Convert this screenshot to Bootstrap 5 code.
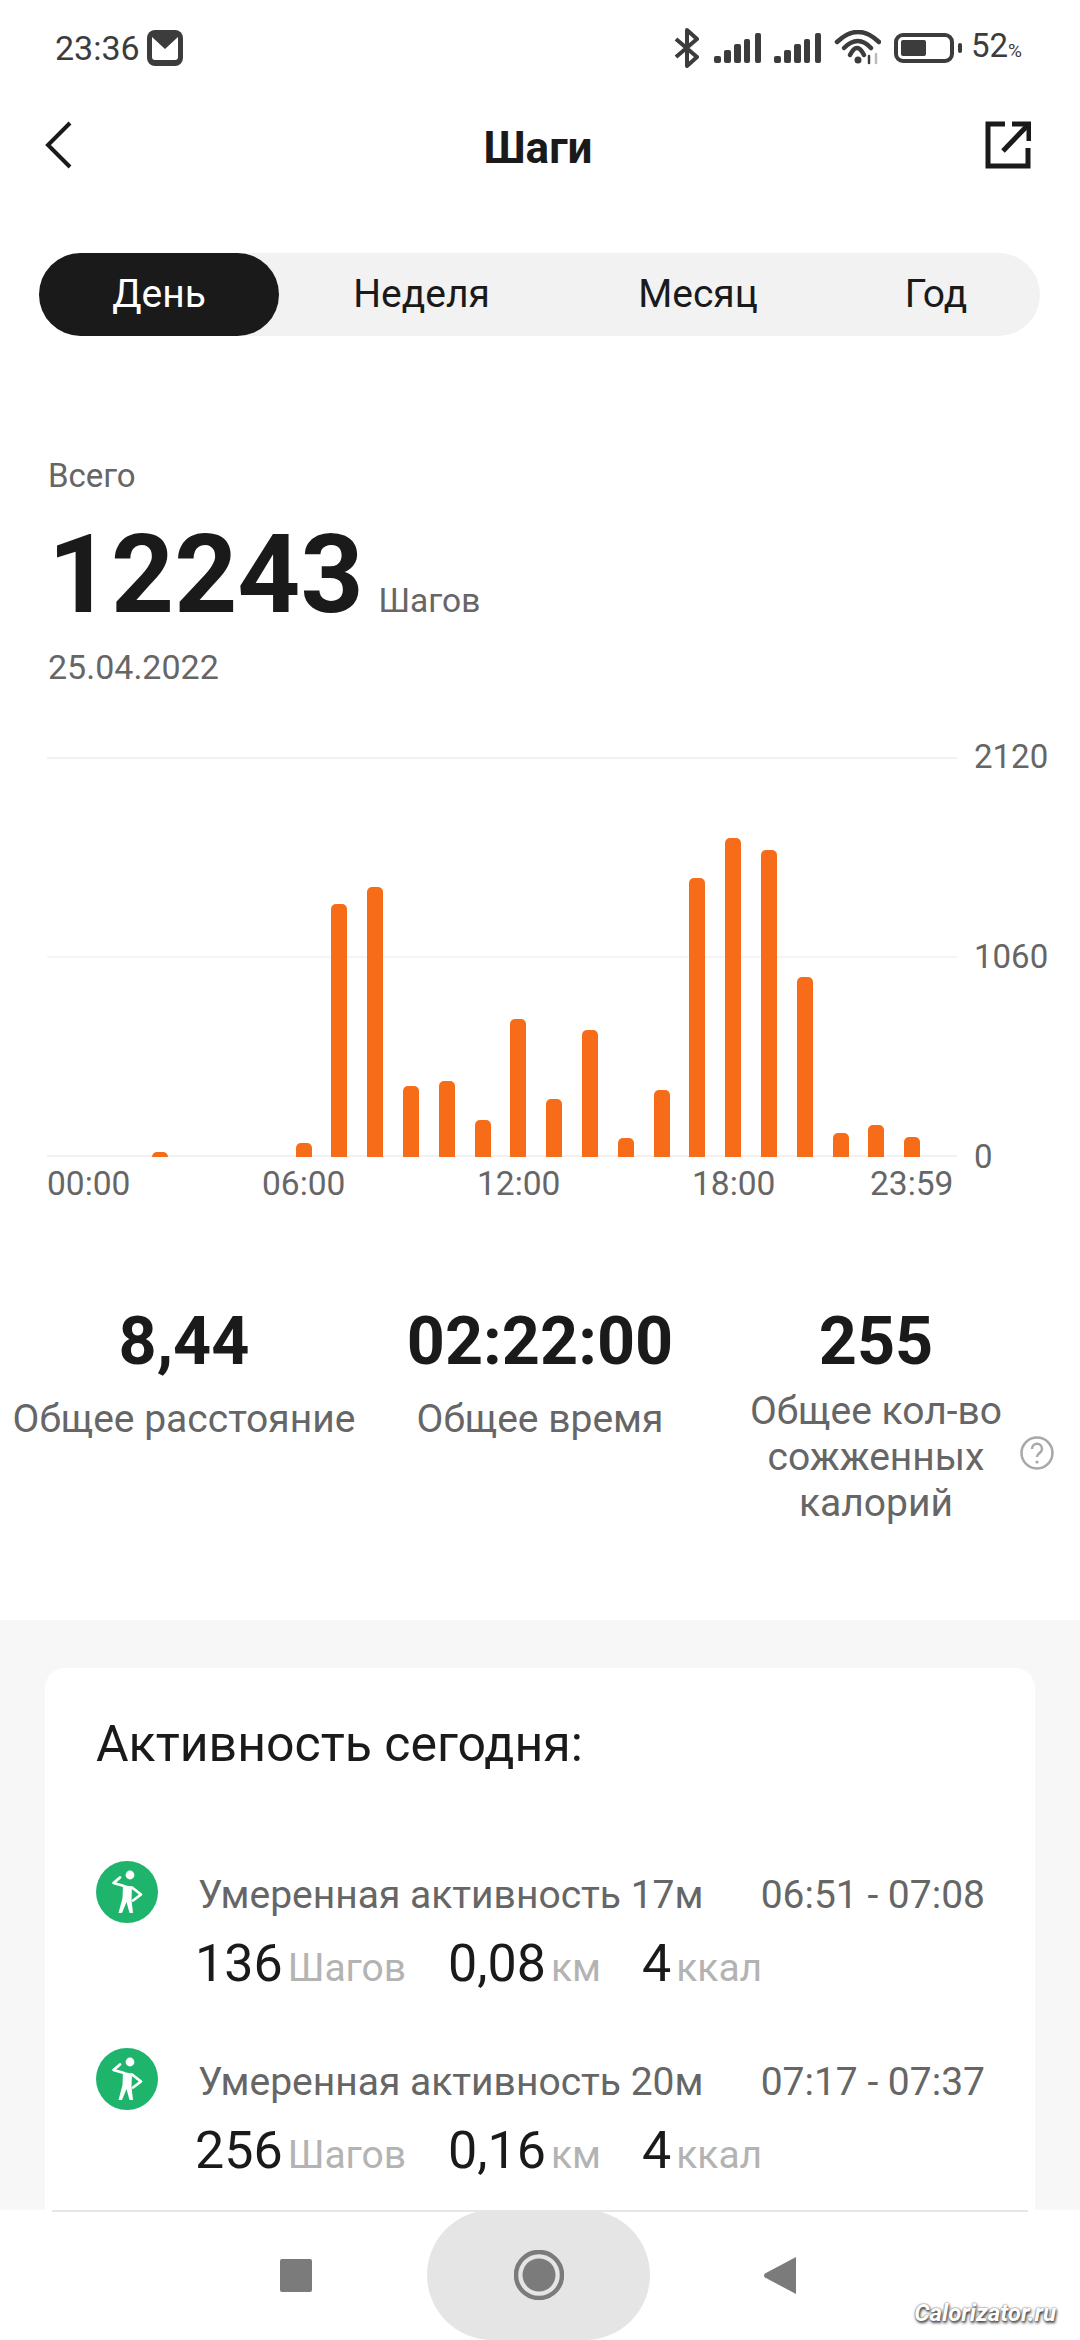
<!DOCTYPE html>
<html lang="ru">
<head>
  <meta charset="UTF-8">
  <meta name="viewport" content="width=device-width, initial-scale=1.0">
  <title>Шаги</title>
  <link href="https://cdn.jsdelivr.net/npm/bootstrap@5.3.3/dist/css/bootstrap.min.css" rel="stylesheet">
  <style>
    html, body { margin: 0; background: #fff; }
    body { font-family: Roboto, "Liberation Sans", sans-serif; color: #1a1a1a; }
    .app-screen { width: 1080px; height: 2340px; overflow: hidden; position: relative; }

    .status-row { height: 96px; padding: 0 58px 0 55px; color: #3c3c3c; }
    .status-time { font-size: 34px; line-height: 40px; width: 92px; }
    .status-pct { font-size: 33px; line-height: 40px; margin-left: 9px; }
    .status-pct span { font-size: 19px; }

    .head-row { height: 104px; padding: 0 49px 0 45px; }
    .head-title { font-size: 44px; font-weight: 700; line-height: 50px; }
    .head-back { margin: 0 18px 6px 0; }
    .head-share { margin-bottom: 6px; }

    .seg-wrap { margin: 53px 40px 0 39px; height: 83px; background: #f2f2f2; border-radius: 42px; }
    .seg-item { font-size: 39px; line-height: 83px; text-align: center; color: #1a1a1a; }
    .seg-on { width: 240px; background: #1a1a1a; color: #fff; border-radius: 42px; }
    .seg-a { width: 285px; }
    .seg-b { width: 268px; }
    .seg-c { width: 208px; }

    .total-box { padding-left: 48px; }
    .total-cap { margin-top: 120px; font-size: 33px; line-height: 40px; color: #666; }
    .total-num { margin-top: 29px; height: 100px; line-height: 100px; font-size: 110px; font-weight: 700; }
    .total-unit { font-size: 33.5px; font-weight: 400; color: #666; margin-left: 15px; }
    .total-date { margin-top: 22px; font-size: 34px; line-height: 40px; color: #666; }

    .chart-box { margin-top: 70px; padding-left: 47px; }
    .chart-plot {
      width: 910px; height: 400px; padding-left: 24px;
      background:
        linear-gradient(#f1f1f1, #f1f1f1) 0 0 / 100% 2px no-repeat,
        linear-gradient(#f5f5f5, #f5f5f5) 0 199px / 100% 2px no-repeat,
        linear-gradient(#f1f1f1, #f1f1f1) 0 398px / 100% 2px no-repeat;
    }
    .bar-slot { width: 35.8px; height: 400px; flex: none; }
    .bar-fill { width: 16px; background: #f76c18; border-radius: 5px 5px 0 0; }
    .axis-y { height: 440px; margin: -20px 0 -20px 17px; font-size: 33px; line-height: 40px; color: #666; }
    .axis-x { margin: 7px 0 0 47px; font-size: 33.5px; line-height: 40px; color: #666; }
    .axis-x span { width: 215px; flex: none; }
    .axis-x span.axis-short { width: 178px; }

    .stats-grid { display: grid; grid-template-columns: 368px 344px 328px 40px; margin-top: 102px; height: 314px; }
    .stat-val { font-size: 66.5px; font-weight: 700; line-height: 70px; }
    .stat-lab { font-size: 39px; line-height: 46px; color: #666; margin-top: 20px; }
    .stat-lab-top { margin-top: 12px; }
    .stat-help { padding-top: 130px; margin-left: -47px; }

    .lower-area { background: #f7f7f7; padding: 48px 45px 0; flex: 1 1 0; min-height: 0; overflow: hidden; }
    .act-card { background: #fff; border-radius: 20px 20px 0 0; padding: 50px 50px 0 51px; height: 600px; }
    .act-head { font-size: 50px; line-height: 52px; }
    .act-row { height: 187px; }
    .act-first { margin-top: 102px; }
    .act-dot { width: 62px; height: 62px; flex: none; margin-top: -11px; }
    .act-body { margin-left: 37px; width: 790px; }
    .act-title { font-size: 39px; line-height: 46px; color: #666; padding-left: 3px; }
    .act-nums { font-size: 52px; line-height: 60px; margin-top: 16px; }
    .act-nums i { font-style: normal; font-size: 39px; color: #b3b3b3; margin-left: 5px; }
    .act-steps { width: 253px; }
    .act-dist { width: 194px; }

    .nav-bottom { height: 130px; flex: none; background: #fff; position: relative; }
    .nav-rule { position: absolute; left: 52px; right: 52px; top: 0; height: 2px; background: #e6e6e6; }
    .nav-home { width: 223px; height: 130px; background: #e5e5e5; border-radius: 90px; margin: 0 114px 0 115px; }
    .water-mark { position: absolute; right: 24px; bottom: 9px; color: #fff; font-size: 24px; font-weight: 700; font-style: italic; text-shadow: 0 0 2px #444, 1px 2px 3px #333; }
  </style>
</head>
<body>
<div class="app-screen d-flex flex-column">

  <!-- Статус-бар -->
  <div class="status-row d-flex align-items-center">
    <div class="status-time">23:36</div>
    <svg width="36" height="36" viewBox="0 0 36 36"><rect width="36" height="36" rx="8" fill="#3c3c3c"/><path d="M5 7v20a3 3 0 0 0 3 3h20a3 3 0 0 0 3-3V7L18 19z" fill="#fff"/></svg>
    <div class="ms-auto d-flex align-items-center">
      <svg width="26" height="40" viewBox="0 0 26 40" fill="none" stroke="#3c3c3c" stroke-width="4" stroke-linejoin="round"><path d="M2 11l21 18-10 9V2l10 9L2 29"/></svg>
      <svg style="margin-left:14px" width="47" height="30" viewBox="0 0 47 30" fill="#3c3c3c"><rect y="23" width="7" height="7" rx="2"/><rect x="10" y="17" width="7" height="13" rx="2"/><rect x="20" y="11" width="7" height="19" rx="2"/><rect x="30" y="6" width="6" height="24" rx="2"/><rect x="41" y="0" width="6" height="30" rx="2"/></svg>
      <svg style="margin-left:13px" width="47" height="30" viewBox="0 0 47 30" fill="#3c3c3c"><rect y="23" width="7" height="7" rx="2"/><rect x="10" y="17" width="7" height="13" rx="2"/><rect x="20" y="11" width="7" height="19" rx="2"/><rect x="30" y="6" width="6" height="24" rx="2"/><rect x="41" y="0" width="6" height="30" rx="2"/></svg>
      <svg style="margin-left:13px" width="47" height="36" viewBox="0 0 47 36" fill="none" stroke="#3c3c3c" stroke-width="4.5" stroke-linecap="round"><path d="M3 12Q24-8 45 12"/><path d="M10 18Q24 4 37 18"/><path d="M16 25Q23 11 30 25"/><circle cx="24" cy="30" r="2.5" fill="#3c3c3c" stroke-width="2"/><path d="M35 26v7" stroke-width="2.5"/><path d="M42 24v9" stroke="#bbb" stroke-width="2.5"/></svg>
      <svg style="margin-left:13px" width="68" height="30" viewBox="0 0 68 30" fill="none"><rect x="2" y="2" width="56" height="26" rx="7" stroke="#3c3c3c" stroke-width="4"/><rect x="7" y="7" width="25" height="16" rx="2" fill="#3c3c3c"/><rect x="64" y="10" width="4" height="10" rx="2" fill="#3c3c3c"/></svg>
      <div class="status-pct">52<span>%</span></div>
    </div>
  </div>

  <!-- Заголовок -->
  <div class="head-row d-flex align-items-center justify-content-between">
    <svg class="head-back" width="28" height="48" viewBox="0 0 28 48" fill="none" stroke="#1a1a1a" stroke-width="4"><path d="M25 2L3 24l22 22"/></svg>
    <div class="head-title">Шаги</div>
    <svg class="head-share" width="46" height="48" viewBox="0 0 46 48" fill="none" stroke="#1a1a1a" stroke-width="5"><path d="M20 3H3v42h40V27"/><path d="M18 30L43 4"/><path d="M27 3h17v17"/></svg>
  </div>

  <!-- Переключатель периода -->
  <div class="seg-wrap d-flex">
    <div class="seg-item seg-on">День</div>
    <div class="seg-item seg-a">Неделя</div>
    <div class="seg-item seg-b">Месяц</div>
    <div class="seg-item seg-c">Год</div>
  </div>

  <!-- Итого -->
  <div class="total-box">
    <div class="total-cap">Всего</div>
    <div class="total-num">12243<span class="total-unit">Шагов</span></div>
    <div class="total-date">25.04.2022</div>
  </div>

  <!-- График -->
  <div class="chart-box d-flex">
    <div class="chart-plot d-flex" id="plot"></div>
    <div class="axis-y d-flex flex-column justify-content-between">
      <div>2120</div><div>1060</div><div>0</div>
    </div>
  </div>
  <div class="axis-x d-flex">
    <span>00:00</span><span>06:00</span><span>12:00</span><span class="axis-short">18:00</span><div>23:59</div>
  </div>

  <!-- Показатели -->
  <div class="stats-grid text-center">
    <div>
      <div class="stat-val">8,44</div>
      <div class="stat-lab">Общее расстояние</div>
    </div>
    <div>
      <div class="stat-val">02:22:00</div>
      <div class="stat-lab">Общее время</div>
    </div>
    <div>
      <div class="stat-val">255</div>
      <div class="stat-lab stat-lab-top">Общее кол-во<br>сожженных<br>калорий</div>
    </div>
    <div class="stat-help">
      <svg width="34" height="34" viewBox="0 0 34 34" fill="none"><circle cx="17" cy="17" r="15.5" stroke="#a8a8a8" stroke-width="2.5"/><path d="M12 13c0-7 10-7 10 0 0 4-5 4-5 8" stroke="#a8a8a8" stroke-width="2.5"/><circle cx="17" cy="26" r="1.6" fill="#a8a8a8"/></svg>
    </div>
  </div>

  <!-- Активность -->
  <div class="lower-area">
    <div class="act-card">
      <div class="act-head">Активность сегодня:</div>

      <div class="act-row act-first d-flex">
        <svg class="act-dot" viewBox="0 0 62 62"><circle cx="31" cy="31" r="31" fill="#1eb46c"/><circle cx="34" cy="14" r="4.4" fill="#fff"/><path d="M27 24l9 1.500-.5 13 1.500 13.500h-3.500L30.500 41 26 52h-3.500l4-15z" fill="#fff"/><path d="M28 25l-10.500-3L24 16.500M36 26.500l9 7-8 6" fill="none" stroke="#fff" stroke-width="2.800" stroke-linecap="round" stroke-linejoin="round"/></svg>
        <div class="act-body">
          <div class="act-title d-flex justify-content-between"><span>Умеренная активность 17м</span><span>06:51 - 07:08</span></div>
          <div class="act-nums d-flex">
            <div class="act-steps">136<i>Шагов</i></div>
            <div class="act-dist">0,08<i>км</i></div>
            <div>4<i>ккал</i></div>
          </div>
        </div>
      </div>

      <div class="act-row d-flex">
        <svg class="act-dot" viewBox="0 0 62 62"><circle cx="31" cy="31" r="31" fill="#1eb46c"/><circle cx="34" cy="14" r="4.4" fill="#fff"/><path d="M27 24l9 1.500-.5 13 1.500 13.500h-3.500L30.500 41 26 52h-3.500l4-15z" fill="#fff"/><path d="M28 25l-10.500-3L24 16.500M36 26.500l9 7-8 6" fill="none" stroke="#fff" stroke-width="2.800" stroke-linecap="round" stroke-linejoin="round"/></svg>
        <div class="act-body">
          <div class="act-title d-flex justify-content-between"><span>Умеренная активность 20м</span><span>07:17 - 07:37</span></div>
          <div class="act-nums d-flex">
            <div class="act-steps">256<i>Шагов</i></div>
            <div class="act-dist">0,16<i>км</i></div>
            <div>4<i>ккал</i></div>
          </div>
        </div>
      </div>
    </div>
  </div>

  <!-- Навигация -->
  <div class="nav-bottom d-flex align-items-center">
    <div class="nav-rule"></div>
    <svg style="margin-left:280px" width="32" height="33" viewBox="0 0 32 33"><rect width="32" height="33" rx="2" fill="#7b7b7b"/></svg>
    <div class="nav-home d-flex align-items-center justify-content-center">
      <svg width="50" height="50" viewBox="0 0 50 50" fill="none"><circle cx="25" cy="25" r="23" stroke="#7b7b7b" stroke-width="4.5"/><circle cx="25" cy="25" r="16.5" fill="#7b7b7b"/></svg>
    </div>
    <svg width="32" height="37" viewBox="0 0 32 37"><path d="M32 0v37L1 20.500a2.500 2.500 0 0 1 0-4z" fill="#7b7b7b"/></svg>
    <div class="water-mark">Calorizator.ru</div>
  </div>
</div>

<script src="https://cdn.jsdelivr.net/npm/bootstrap@5.3.3/dist/js/bootstrap.bundle.min.js"></script>
<script>
  // высота столбиков по часам, px
  var hours = [0, 0, 5, 0, 0, 0, 14, 253, 270, 71, 76, 37, 138, 58, 127, 19, 67, 279, 319, 307, 180, 24, 32, 20];
  var plot = document.getElementById('plot');
  hours.forEach(function (h) {
    var slot = document.createElement('div');
    slot.className = 'bar-slot d-flex align-items-end justify-content-center';
    if (h > 0) {
      var bar = document.createElement('div');
      bar.className = 'bar-fill';
      bar.style.height = h + 'px';
      slot.appendChild(bar);
    }
    plot.appendChild(slot);
  });
</script>
</body>
</html>
